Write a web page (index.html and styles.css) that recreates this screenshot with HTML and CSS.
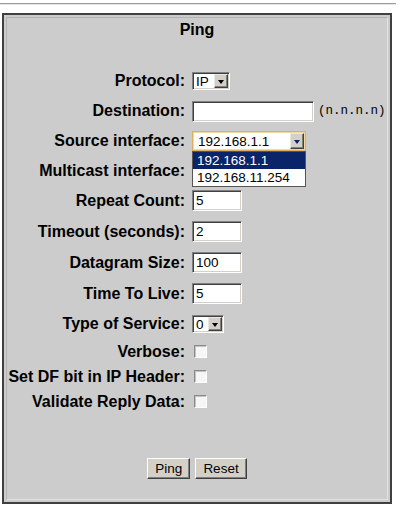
FILE: index.html
```html
<!DOCTYPE html>
<html lang="en">
<head>
    <meta charset="UTF-8">
    <title>Ping</title>
    <link rel="stylesheet" href="styles.css">
</head>
<body>
    <hr class="rule">
    <div class="panel">
        <div class="cell">
            <h2 class="title">Ping</h2>
            <form class="form">
                <div class="row">
                    <label>Protocol:</label>
                    <div class="select protocol"><span class="value">IP</span><span class="arrow"></span></div>
                </div>
                <div class="row">
                    <label>Destination:</label>
                    <div class="field">
                        <input type="text" class="text wide">
                        <span class="hint">(n.n.n.n)</span>
                    </div>
                </div>
                <div class="row">
                    <label>Source interface:</label>
                    <div class="dropdown">
                        <div class="select source focus"><span class="value">192.168.1.1</span><span class="arrow"></span></div>
                        <ul class="options">
                            <li class="picked">192.168.1.1</li>
                            <li>192.168.11.254</li>
                        </ul>
                    </div>
                </div>
                <div class="row short">
                    <label>Multicast interface:</label>
                    <div class="select source"><span class="value"></span><span class="arrow"></span></div>
                </div>
                <div class="row tall">
                    <label>Repeat Count:</label>
                    <input type="text" class="text" value="5">
                </div>
                <div class="row tall">
                    <label>Timeout (seconds):</label>
                    <input type="text" class="text" value="2">
                </div>
                <div class="row tall">
                    <label>Datagram Size:</label>
                    <input type="text" class="text" value="100">
                </div>
                <div class="row tall">
                    <label>Time To Live:</label>
                    <input type="text" class="text" value="5">
                </div>
                <div class="row">
                    <label>Type of Service:</label>
                    <div class="select tos"><span class="value">0</span><span class="arrow"></span></div>
                </div>
                <div class="row check">
                    <label>Verbose:</label>
                    <input type="checkbox" class="box">
                </div>
                <div class="row check">
                    <label>Set DF bit in IP Header:</label>
                    <input type="checkbox" class="box">
                </div>
                <div class="row check">
                    <label>Validate Reply Data:</label>
                    <input type="checkbox" class="box">
                </div>

                <div class="buttons">
                    <button type="button">Ping</button>
                    <button type="reset">Reset</button>
                </div>
            </form>
        </div>
    </div>
</body>
</html>
```

FILE: styles.css
```css
*{
    font-family: "Liberation Sans", Arial, sans-serif;
    box-sizing: border-box;
}
body{
    margin: 0;
    background-color: #ffffff;
    color: #000000;
}

.rule{
    margin: 3px 7px 0 0;
    height: 0;
    border: 0;
    border-top: 1px solid #9c9c9c;
    border-bottom: 1px solid #e6e6e6;
}

.panel{
    margin: 8px 0 0 2px;
    width: 390px;
    height: 491px;
    padding: 2px;
    border: 2px solid #404040;
    background-color: #cccccc;
}
.cell{
    height: 100%;
    border: 1px solid;
    border-color: #b4b4b4 #e2e2e2 #e2e2e2 #b4b4b4;
}

.title{
    margin: 2px 0 0;
    font-size: 16px;
    line-height: 20px;
    font-weight: bold;
    text-align: center;
}

.form{
    margin-top: 26px;
}
.row{
    display: grid;
    grid-template-columns: 178px 1fr;
    column-gap: 7px;
    align-items: center;
    height: 30px;
}
.row.short{
    height: 29px;
}
.row.tall{
    height: 31px;
}
.row.check{
    height: 25px;
}
.row label{
    font-size: 16px;
    font-weight: bold;
    text-align: right;
    white-space: nowrap;
}

/* classic sunken controls */
.text{
    width: 50px;
    height: 21px;
    margin: 0;
    padding: 0 3px;
    font-size: 13.5px;
    border: 1px solid;
    border-color: #808080 #ffffff #ffffff #808080;
    box-shadow: inset 1px 1px 0 #404040, inset -1px -1px 0 #d4d0c8;
    background-color: #ffffff;
    outline: none;
}
.text.wide{
    width: 122px;
}
.field{
    display: flex;
    align-items: center;
}
.hint{
    margin-left: 4px;
    font-family: "Liberation Mono", "Courier New", monospace;
    font-size: 12.5px;
}

.select{
    display: flex;
    height: 18px;
    border: 1px solid;
    border-color: #808080 #ffffff #ffffff #808080;
    box-shadow: inset 1px 1px 0 #404040, inset -1px -1px 0 #d4d0c8;
    background-color: #ffffff;
    padding: 1px;
    font-size: 13.5px;
}
.select .value{
    flex: 1;
    padding-left: 2px;
    line-height: 15px;
    white-space: nowrap;
    overflow: hidden;
}
.select .arrow{
    position: relative;
    width: 14px;
    background-color: #d4d0c8;
    border: 1px solid;
    border-color: #e8e8e8 #404040 #404040 #e8e8e8;
    box-shadow: inset -1px -1px 0 #808080;
}
.select .arrow::after{
    content: "";
    position: absolute;
    left: 3px;
    top: 5px;
    border-left: 3.5px solid transparent;
    border-right: 3.5px solid transparent;
    border-top: 4px solid #000000;
}
.select.protocol{
    width: 38px;
}
.select.tos{
    width: 32px;
}
.select.source{
    width: 114px;
    height: 20px;
}
.select.source .value{
    line-height: 17px;
    padding-left: 4px;
}
.select.source .arrow::after{
    top: 6px;
}
.select.focus{
    border-color: #dcb060;
    box-shadow: inset 1px 1px 0 #f0d8a0, inset -1px -1px 0 #f0d8a0;
}
.select.focus .arrow::after{
    border-top-color: #0a246a;
}

.dropdown{
    position: relative;
    width: 114px;
}
.options{
    position: absolute;
    left: 0;
    top: 100%;
    z-index: 10;
    width: 114px;
    margin: 0;
    padding: 0;
    list-style: none;
    border: 1px solid #555555;
    background-color: #ffffff;
    font-size: 13.5px;
}
.options li{
    height: 17px;
    line-height: 17px;
    padding-left: 4px;
}
.options li.picked{
    background-color: #0a246a;
    color: #ffffff;
}

.box{
    appearance: none;
    width: 13px;
    height: 13px;
    margin: 0 0 0 2px;
    border: 1px solid;
    border-color: #8a8a8a #ffffff #ffffff #8a8a8a;
    box-shadow: inset 1px 1px 0 #c4c4c4;
    background-color: #f6f6f6;
}

.buttons{
    display: flex;
    justify-content: center;
    gap: 5px;
    margin-top: 44px;
}
.buttons button{
    height: 21px;
    padding: 0 7px;
    font-size: 13.5px;
    color: #000000;
    background-color: #d4d0c8;
    border: 1px solid;
    border-color: #ffffff #404040 #404040 #ffffff;
    box-shadow: inset -1px -1px 0 #808080;
}
```
